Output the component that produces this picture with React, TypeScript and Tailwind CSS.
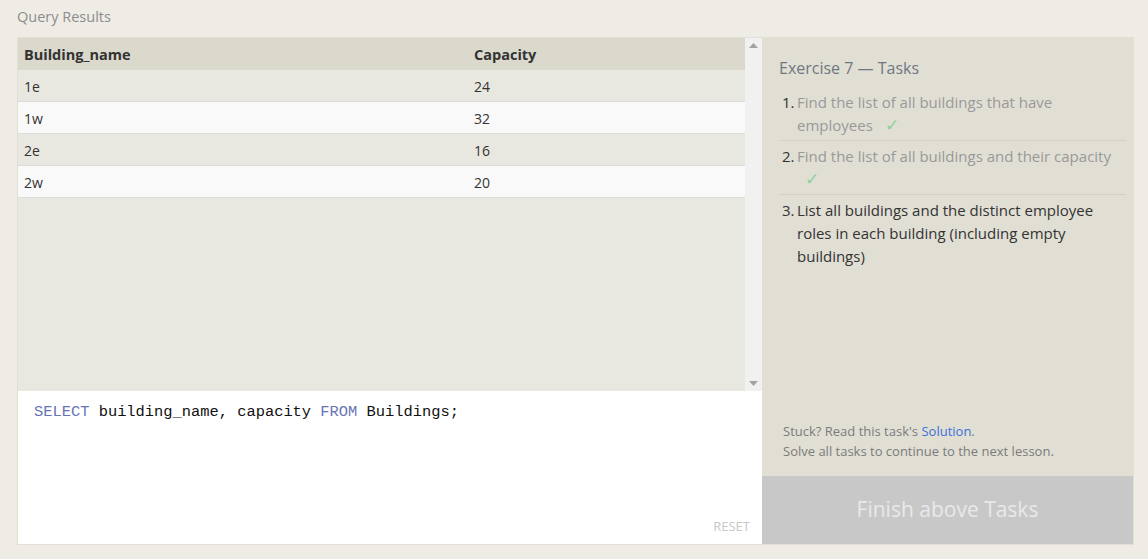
import React from "react";

const rows = [
  { name: "1e", capacity: "24" },
  { name: "1w", capacity: "32" },
  { name: "2e", capacity: "16" },
  { name: "2w", capacity: "20" },
];

function ScrollArrow({ down }: { down?: boolean }) {
  return (
    <svg width="9" height="5" viewBox="0 0 9 5" className="fill-[#a3a3a3]">
      {down ? <polygon points="0,0 9,0 4.5,5" /> : <polygon points="0,5 9,5 4.5,0" />}
    </svg>
  );
}

function Check() {
  return <span className="ml-2 text-[17px] leading-none text-[#8fd09b]">✓</span>;
}

export default function App() {
  return (
    <div className="min-h-[559px] bg-[#efece5] pl-[17px] pr-[14px] font-['Open_Sans','Noto_Sans',sans-serif]">
      <div className="h-[37px] pt-[6px] text-[14.5px] text-[#8c8c8c]">Query Results</div>

      <div className="flex h-[508px] border border-[#e2e0d6]">
        {/* left: results + editor */}
        <div className="flex w-[744px] flex-col">
          <div className="flex h-[353px] bg-[#e9e8e0]">
            <div className="flex-1">
              <div className="flex h-[32px] items-center bg-[#dad9cc] pt-px text-[14.5px] font-bold text-[#333]">
                <div className="w-[456px] pl-[6px]">Building_name</div>
                <div>Capacity</div>
              </div>
              {rows.map((r, i) => (
                <div
                  key={r.name}
                  className={`flex h-[32px] items-center border-b border-[#dcdcd8] pt-px text-[14px] text-[#333] ${
                    i % 2 === 0 ? "bg-[#e9e8e0]" : "bg-[#f9f9f9]"
                  }`}
                >
                  <div className="w-[456px] pl-[6px]">{r.name}</div>
                  <div>{r.capacity}</div>
                </div>
              ))}
            </div>
            <div className="flex w-[17px] flex-col items-center justify-between bg-[#f1f1f1] py-[5px]">
              <ScrollArrow />
              <ScrollArrow down />
            </div>
          </div>

          <div className="flex flex-1 flex-col justify-between bg-white pl-[16px] pr-[12px] pt-[9px] pb-[8px]">
            <div className="font-['Liberation_Mono','DejaVu_Sans_Mono',monospace] text-[15.4px] leading-[24px] text-[#111]">
              <span className="text-[#6874b4]">SELECT</span> building_name, capacity{" "}
              <span className="text-[#6874b4]">FROM</span> Buildings;
            </div>
            <div className="self-end text-[13px] text-[#c8c8c8]">RESET</div>
          </div>
        </div>

        {/* right: tasks */}
        <div className="flex w-[371px] flex-col bg-[#e1dfd4]">
          <div className="flex flex-1 flex-col justify-between pl-[17px] pr-[7px] pt-[18px] pb-[15px]">
            <div>
              <div className="text-[16px] text-[#6f7782]">Exercise 7 — Tasks</div>
              <ol className="mt-[11px] text-[15px] leading-[23px]">
                <li className="flex border-b border-[#d3d1c6] pb-[3px]">
                  <span className="w-[18px] shrink-0 pl-[3px] text-[#333]">1.</span>
                  <span className="pr-[8px] text-[#999]">
                    Find the list of all buildings that have employees <Check />
                  </span>
                </li>
                <li className="flex border-b border-[#d3d1c6] pt-[4px] pb-[3px]">
                  <span className="w-[18px] shrink-0 pl-[3px] text-[#333]">2.</span>
                  <span className="pr-[8px] text-[#999]">
                    Find the list of all buildings and their capacity <Check />
                  </span>
                </li>
                <li className="flex pt-[4px]">
                  <span className="w-[18px] shrink-0 pl-[3px] text-[#333]">3.</span>
                  <span className="pr-[8px] text-[#333]">
                    List all buildings and the distinct employee roles in each building (including empty buildings)
                  </span>
                </li>
              </ol>
            </div>
            <div className="pl-[4px] text-[13px] leading-[20px] text-[#7b7b7b]">
              <div>
                Stuck? Read this task's <span className="text-[#3c6fd8]">Solution</span>.
              </div>
              <div>Solve all tasks to continue to the next lesson.</div>
            </div>
          </div>
          <div className="flex h-[68px] items-center justify-center bg-[#c8c8c8] text-[21px] text-[#e9e9e9]">
            Finish above Tasks
          </div>
        </div>
      </div>
    </div>
  );
}
